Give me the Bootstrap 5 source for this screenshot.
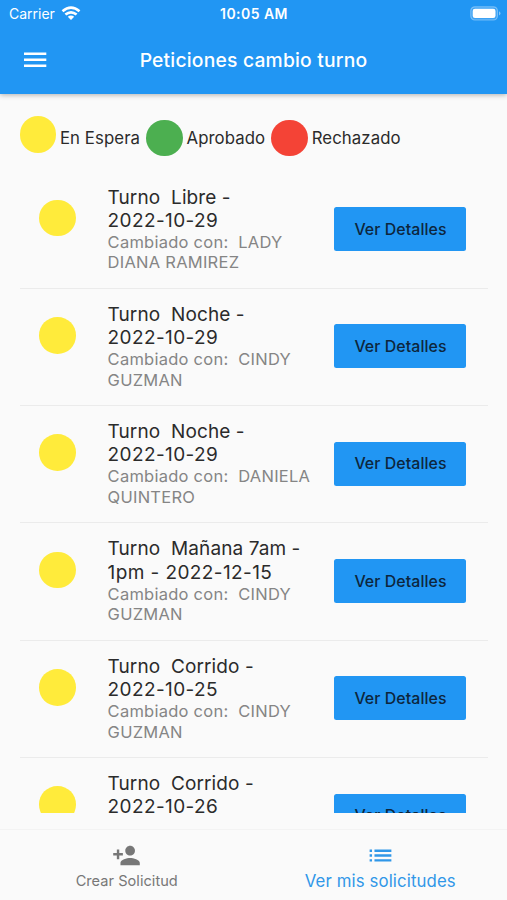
<!DOCTYPE html>
<html lang="es">
<head>
<meta charset="utf-8">
<meta name="viewport" content="width=device-width, initial-scale=1">
<title>Peticiones cambio turno</title>
<link href="https://cdn.jsdelivr.net/npm/bootstrap@5.3.0/dist/css/bootstrap.min.css" rel="stylesheet">
<style>
body{font-family:Inter,"Liberation Sans",sans-serif;background:#fafafa;color:#2b2b2b;height:900px}
.app-header{background:#2196f3;height:94px;box-shadow:0 1px 5px rgba(0,0,0,.3);z-index:2}
.status-bar{height:27px;padding:0 6px 0 9px;font-size:14px;line-height:27px}
.status-side{width:120px}
.wifi{margin-left:6px}
.clock{font-size:14px;letter-spacing:.45px;margin-right:2px}
.title-bar{height:65px;padding:0 23px}
.screen-title{font-size:19.3px;letter-spacing:.2px;line-height:24px}
.title-space{width:24px}
.dot{width:36.6px;height:36.6px}
.dot-wait{background:#ffeb3b}.dot-ok{background:#4caf50}.dot-no{background:#f44336}
.legend{height:77.5px;padding:22px 19.5px 0;font-size:16.8px;letter-spacing:.08px;line-height:44px}
.legend-item{gap:3.8px;margin-right:6px;height:44px}
.requests{height:641.5px;padding:0 19.5px}
.request{height:117.3px;border-bottom:1px solid #ebebeb;padding:14px 21.5px 0 19.5px}
.request .dot{margin-top:14.4px}
.details{margin-left:32px;width:226.9px;white-space:pre}
.shift{font-size:19px;line-height:23.3px;letter-spacing:.4px}
.shift::first-line{letter-spacing:.09px}
.partner{font-size:16.5px;line-height:20.7px;letter-spacing:.25px;color:#858585;margin-top:-.4px}
.btn-detail{background:#2196f3;color:#0d263d;width:132px;height:44px;border-radius:2.5px;font-size:15.9px;letter-spacing:.07px;margin-top:21.7px;line-height:43px}
.btn-detail:hover{background:#1e88e5}
.tabs{height:71px;border-top:1px solid #f3f3f3}
.tab{color:#777;font-size:14.6px;letter-spacing:.03px;padding-top:11px;line-height:22px}
.tab:hover{color:#555}
.tab-on,.tab-on:hover{color:#3097e8}
.tab-on{font-size:16.8px;letter-spacing:.12px;line-height:22px}
.tab svg{height:29px;width:29px}
</style>
</head>
<body class="d-flex flex-column overflow-hidden">
<header class="app-header text-white position-relative flex-shrink-0">
  <div class="status-bar d-flex justify-content-between align-items-center">
    <div class="status-side d-flex align-items-center">
      <span>Carrier</span>
      <svg class="wifi" width="20" height="15" viewBox="0 0 20 15" fill="none" stroke="#fff" stroke-width="2.6"><path d="M1.5 5.2Q10-2 18.5 5.2M4.4 8.6Q10 4 15.6 8.6"/><path d="M6.8 10.8Q10 8 13.2 10.8L10 14Z" fill="#fff" stroke="none"/></svg>
    </div>
    <span class="clock fw-semibold">10:05 AM</span>
    <div class="status-side d-flex justify-content-end">
      <svg width="31" height="15" viewBox="0 0 31 15"><rect x=".8" y=".8" width="26.6" height="13.2" rx="4" fill="#fff" fill-opacity=".12" stroke="#fff" stroke-opacity=".35" stroke-width="1.2"/><rect x="2.7" y="2.7" width="22.8" height="9.4" rx="2.3" fill="#fff"/><path d="M29 5.2Q32 7.4 29 9.6Z" fill="#fff" opacity=".45"/></svg>
    </div>
  </div>
  <div class="title-bar d-flex align-items-center justify-content-between">
    <button class="btn p-0 border-0 d-flex" aria-label="Menú"><svg width="24" height="16" viewBox="0 0 24 16" fill="#fff"><path d="M1 .5h22.3v2.6H1zM1 6.5h22.3v2.6H1zM1 12.5h22.3v2.6H1z"/></svg></button>
    <h1 class="screen-title fw-medium mb-0">Peticiones cambio turno</h1>
    <span class="title-space"></span>
  </div>
</header>
<section class="legend d-flex flex-shrink-0">
  <div class="legend-item d-flex"><span class="dot dot-wait rounded-circle"></span><span>En Espera</span></div>
  <div class="legend-item d-flex align-items-center"><span class="dot dot-ok rounded-circle"></span><span>Aprobado</span></div>
  <div class="legend-item d-flex align-items-center"><span class="dot dot-no rounded-circle"></span><span>Rechazado</span></div>
</section>
<main class="requests overflow-hidden flex-shrink-0">
  <article class="request d-flex align-items-start"><span class="dot dot-wait rounded-circle flex-shrink-0"></span><div class="details flex-shrink-0"><div class="shift">Turno  Libre -
2022-10-29</div><div class="partner">Cambiado con:  LADY
DIANA RAMIREZ</div></div><button class="btn btn-detail fw-medium border-0 p-0 flex-shrink-0">Ver Detalles</button></article>
  <article class="request d-flex align-items-start"><span class="dot dot-wait rounded-circle flex-shrink-0"></span><div class="details flex-shrink-0"><div class="shift">Turno  Noche -
2022-10-29</div><div class="partner">Cambiado con:  CINDY
GUZMAN</div></div><button class="btn btn-detail fw-medium border-0 p-0 flex-shrink-0">Ver Detalles</button></article>
  <article class="request d-flex align-items-start"><span class="dot dot-wait rounded-circle flex-shrink-0"></span><div class="details flex-shrink-0"><div class="shift">Turno  Noche -
2022-10-29</div><div class="partner">Cambiado con:  DANIELA
QUINTERO</div></div><button class="btn btn-detail fw-medium border-0 p-0 flex-shrink-0">Ver Detalles</button></article>
  <article class="request d-flex align-items-start"><span class="dot dot-wait rounded-circle flex-shrink-0"></span><div class="details flex-shrink-0"><div class="shift">Turno  Mañana 7am -
1pm - 2022-12-15</div><div class="partner">Cambiado con:  CINDY
GUZMAN</div></div><button class="btn btn-detail fw-medium border-0 p-0 flex-shrink-0">Ver Detalles</button></article>
  <article class="request d-flex align-items-start"><span class="dot dot-wait rounded-circle flex-shrink-0"></span><div class="details flex-shrink-0"><div class="shift">Turno  Corrido -
2022-10-25</div><div class="partner">Cambiado con:  CINDY
GUZMAN</div></div><button class="btn btn-detail fw-medium border-0 p-0 flex-shrink-0">Ver Detalles</button></article>
  <article class="request d-flex align-items-start"><span class="dot dot-wait rounded-circle flex-shrink-0"></span><div class="details flex-shrink-0"><div class="shift">Turno  Corrido -
2022-10-26</div></div><button class="btn btn-detail fw-medium border-0 p-0 flex-shrink-0">Ver Detalles</button></article>
</main>
<nav class="tabs d-flex mt-auto flex-shrink-0">
  <a href="#" class="tab w-50 d-flex flex-column align-items-center text-decoration-none"><svg viewBox="0 0 24 24" fill="currentColor"><path d="M15 12c2.21 0 4-1.79 4-4s-1.79-4-4-4-4 1.790-4 4 1.790 4 4 4zm-9-2V7H4v3H1v2h3v3h2v-3h3v-2H6zm9 4c-2.670 0-8 1.340-8 4v2h16v-2c0-2.660-5.330-4-8-4z"/></svg><span>Crear Solicitud</span></a>
  <a href="#" class="tab tab-on w-50 d-flex flex-column align-items-center text-decoration-none"><svg viewBox="0 0 24 24" fill="currentColor"><path d="M3 13h2v-2H3v2zm0 4h2v-2H3v2zm0-8h2V7H3v2zm4 4h14v-2H7v2zm0 4h14v-2H7v2zM7 7v2h14V7H7z"/></svg><span>Ver mis solicitudes</span></a>
</nav>
<script src="https://cdn.jsdelivr.net/npm/bootstrap@5.3.0/dist/js/bootstrap.bundle.min.js"></script>
</body>
</html>
